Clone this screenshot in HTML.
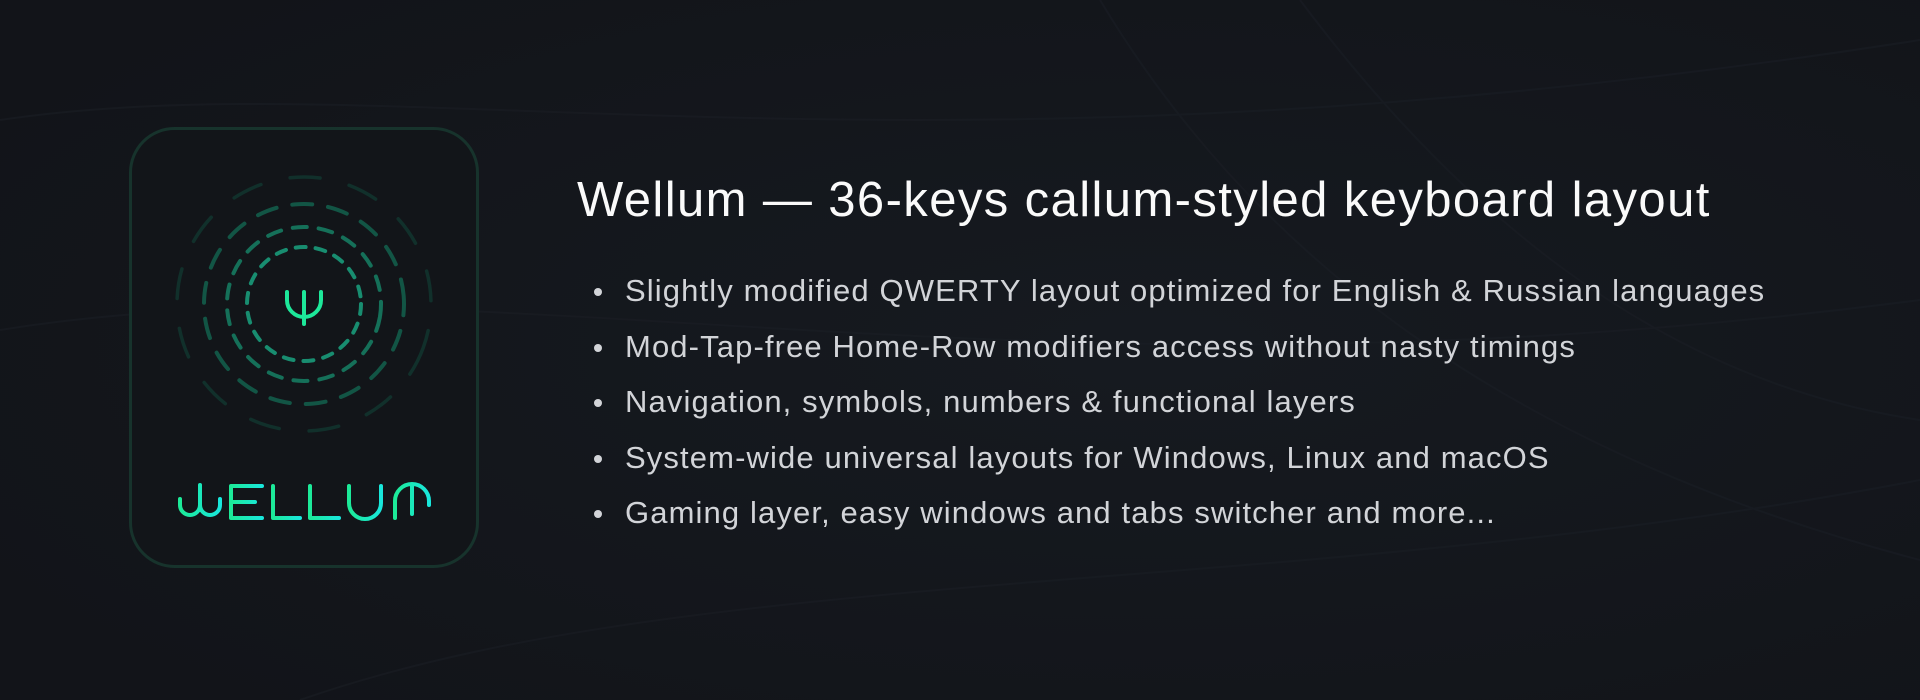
<!DOCTYPE html>
<html><head><meta charset="utf-8"><style>
html,body{margin:0;padding:0}
body{width:1920px;height:700px;overflow:hidden;position:relative;background:#14171d;font-family:"Liberation Sans",sans-serif}
.bg{position:absolute;inset:0}
h1{position:absolute;left:577px;top:172px;margin:0;font-weight:400;font-size:49px;line-height:56px;color:#fafafa;white-space:nowrap;letter-spacing:1.4px}
ul{position:absolute;left:600px;top:263px;margin:0;padding:0;list-style:none}
li{position:relative;padding-left:25px;font-size:31px;line-height:55.5px;color:#d2d4d8;white-space:nowrap;letter-spacing:1.12px}
li:before{content:"";position:absolute;left:-6px;top:25px;width:8px;height:8px;border-radius:50%;background:#d2d4d8}
</style></head><body>
<svg class="bg" width="1920" height="700" viewBox="0 0 1920 700">
<defs><radialGradient id="g" cx="0.6" cy="0.5" r="0.7"><stop offset="0" stop-color="#161a20"/><stop offset="1" stop-color="#121419"/></radialGradient></defs>
<rect width="1920" height="700" fill="url(#g)"/>
<g fill="none" stroke="#1a1e25" stroke-width="2" opacity="0.6">
<path d="M0 120 C400 60 900 200 1920 40"/>
<path d="M0 330 C500 250 1000 420 1920 300"/>
<path d="M300 700 C700 560 1300 600 1920 480"/>
<path d="M1100 0 C1250 250 1500 450 1920 560"/>
<path d="M1300 0 C1450 200 1650 380 1920 420"/>
</g>
<rect x="130.5" y="128.5" width="347" height="438" rx="44" fill="#121519" stroke="#17332c" stroke-width="3"/>
<g fill="none" stroke-linecap="round" transform="translate(304 304)">
<circle r="57" stroke="#1a9a7a" stroke-width="4" stroke-dasharray="10 10" opacity="0.9"/>
<circle r="77" stroke="#167a60" stroke-width="4" stroke-dasharray="14 12" opacity="0.9" transform="rotate(10)"/>
<circle r="100" stroke="#135c4a" stroke-width="4" stroke-dasharray="20 16" opacity="0.9" transform="rotate(-5)"/>
<circle r="127" stroke="#113a32" stroke-width="3.5" stroke-dasharray="30 30" opacity="0.75" transform="rotate(20)"/>
</g>
<g fill="none" stroke="#1de89a" stroke-width="4" stroke-linecap="round">
<path d="M287 292 V300 A17 17 0 0 0 321 300 V292"/>
<path d="M304 292 V324"/>
</g>
<defs><linearGradient id="t" x1="0" x2="1"><stop offset="0" stop-color="#1cea98"/><stop offset="1" stop-color="#19e7dc"/></linearGradient></defs>
<g fill="none" stroke="url(#t)" stroke-width="4" stroke-linecap="round" stroke-linejoin="round">
<path d="M180 499 V505 A10 10 0 0 0 200 505 V485 V505 A10 10 0 0 0 220 505 V499"/>
<path d="M262 486 H231 V518 H262 M231 502 H255"/>
<path d="M273 486 V518 H300"/>
<path d="M310 486 V518 H339"/>
<path d="M349 486 V503 A16 16 0 0 0 381 503 V486"/>
<path d="M395 518 V501 A17 17 0 0 1 429 501 V505 M412 486 V514"/>
</g>
</svg>
<h1>Wellum — 36-keys callum-styled keyboard layout</h1>
<ul>
<li>Slightly modified QWERTY layout optimized for English &amp; Russian languages</li>
<li>Mod-Tap-free Home-Row modifiers access without nasty timings</li>
<li>Navigation, symbols, numbers &amp; functional layers</li>
<li>System-wide universal layouts for Windows, Linux and macOS</li>
<li>Gaming layer, easy windows and tabs switcher and more...</li>
</ul>
</body></html>
